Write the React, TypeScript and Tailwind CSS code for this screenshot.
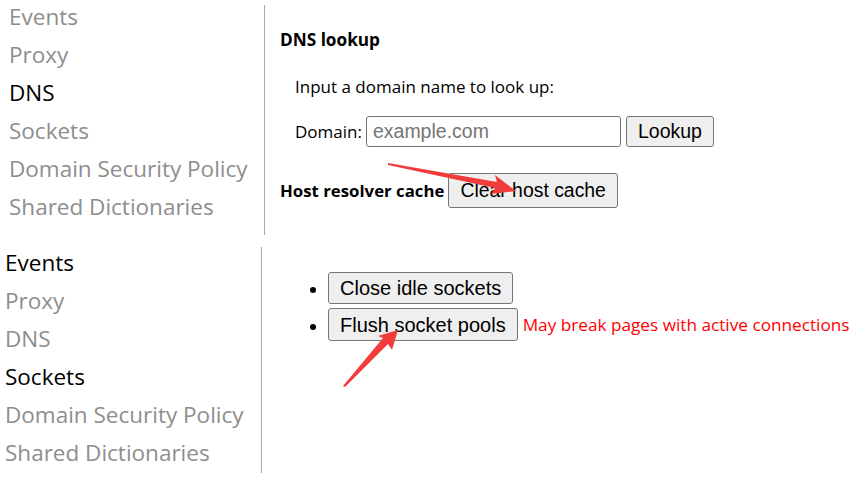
import React from "react";

const seg = { fontFamily: '"Open Sans", "Noto Sans", sans-serif' };
const ari = { fontFamily: '"Liberation Sans", Arial, sans-serif' };

function Sidebar({ active, pl }: { active: string[]; pl: string }) {
  const items = ["Events", "Proxy", "DNS", "Sockets", "Domain Security Policy", "Shared Dictionaries"];
  return (
    <div className={`flex flex-col ${pl}`} style={seg}>
      {items.map((it) => (
        <div
          key={it}
          className={`h-[38px] leading-[38px] text-[22.5px] whitespace-nowrap ${
            active.includes(it) ? "text-black" : "text-[#8e8e8e]"
          }`}
        >
          {it}
        </div>
      ))}
    </div>
  );
}

function Btn({ children, className = "" }: { children: React.ReactNode; className?: string }) {
  return (
    <button
      className={`border border-[#767676] bg-[#efefef] rounded-[3px] text-black px-[11px] leading-none ${className}`}
      style={ari}
    >
      {children}
    </button>
  );
}

export default function App() {
  return (
    <div className="relative w-[865px] h-[492px] bg-white overflow-hidden">
      {/* Top screenshot */}
      <div className="flex h-[242px]">
        <div className="w-[264px] shrink-0 -mt-[2px]">
          <Sidebar active={["DNS"]} pl="pl-[9px]" />
        </div>
        <div className="flex flex-col">
          <div className="mt-[5px] w-px h-[230px] bg-[#a9a9a9]" />
        </div>
        <div className="pl-[15px] pt-[28px] flex flex-col" style={seg}>
          <div className="text-[17.2px] font-bold text-black leading-[24px]">DNS lookup</div>
          <div className="pl-[15px] mt-[23px] text-[17px] text-black leading-[24px]">
            Input a domain name to look up:
          </div>
          <div className="pl-[15px] mt-[17px] flex items-center gap-[4px]">
            <span className="text-[17px] text-black">Domain:</span>
            <input
              placeholder="example.com"
              className="w-[255px] h-[31px] border border-[#767676] rounded-[3px] px-[6px] text-[19.5px] placeholder:text-[#757575] outline-none"
              style={ari}
            />
            <Btn className="h-[31px] ml-[1px] text-[19.5px]">Lookup</Btn>
          </div>
          <div className="mt-[26px] flex items-center gap-[4px]">
            <span className="text-[16.8px] font-bold text-black">Host resolver cache</span>
            <Btn className="h-[35px] text-[19.4px]">Clear host cache</Btn>
          </div>
        </div>
      </div>

      {/* Bottom screenshot */}
      <div className="flex h-[250px]">
        <div className="w-[261px] shrink-0 mt-[2px]">
          <Sidebar active={["Events", "Sockets"]} pl="pl-[5px]" />
        </div>
        <div className="flex flex-col">
          <div className="mt-[5px] w-px h-[226px] bg-[#a9a9a9]" />
        </div>
        <div className="pt-[30px]" style={seg}>
          <ul className="list-disc pl-[66px] flex flex-col gap-[4px]">
            <li className="marker:text-black">
              <div className="flex items-center">
                <Btn className="h-[32px] text-[20px]">Close idle sockets</Btn>
              </div>
            </li>
            <li className="marker:text-black">
              <div className="flex items-center">
                <Btn className="h-[33px] text-[20px]">Flush socket pools</Btn>
                <span className="ml-[5px] text-[17.2px] text-[#ff0000] whitespace-nowrap">
                  May break pages with active connections
                </span>
              </div>
            </li>
          </ul>
        </div>
      </div>

      {/* Annotation arrows */}
      <svg className="absolute left-0 top-0 pointer-events-none" width="865" height="492">
        <polygon
          points="388,163 497,182 495,175 516,191 491,194 495,188 388,165"
          fill="#f23c3c"
        />
        <polygon
          points="343,386 383,338 378,336 398,330 392,350 388,344 345,387"
          fill="#f23c3c"
        />
      </svg>
    </div>
  );
}
